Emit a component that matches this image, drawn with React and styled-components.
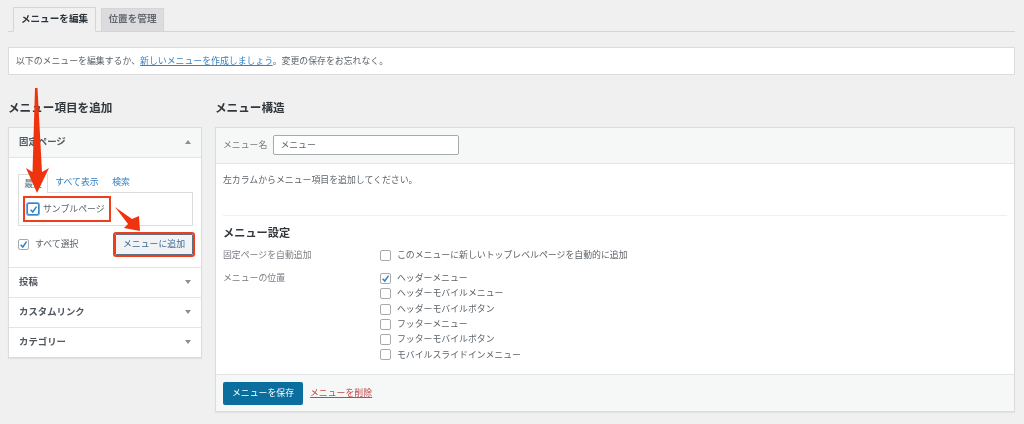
import styled, { createGlobalStyle } from "styled-components";

const GlobalStyle = createGlobalStyle`
  * {
    box-sizing: border-box;
  }

  body {
    margin: 0;
    background-color: #f0f0f1;
    color: #5c6369;
    font-family: "Noto Sans CJK JP", "Liberation Sans", sans-serif;
    font-size: 8.9px;
    line-height: 1.2;
  }
`;

/* --- PAGE --- */
const Page = styled.div`
  position: relative;
  width: 1024px;
  height: 424px;
  padding: 7px 9px 0 8px;
  overflow: hidden;
  filter: blur(0.45px);
`;

/* --- TOP TABS --- */
const TabBar = styled.div`
  display: flex;
  align-items: flex-end;
  gap: 5px;
  height: 25px;
  padding-left: 5px;
  border-bottom: 1px solid #d5d5d7;
`;

const Tab = styled.div`
  display: flex;
  align-items: center;
  justify-content: center;
  width: ${({ $w }) => $w}px;
  height: ${({ $active }) => ($active ? 25 : 24)}px;
  margin-bottom: -1px;
  padding-bottom: 2px;
  border: 1px solid #d5d5d7;
  border-bottom-color: ${({ $active }) => ($active ? "#f0f0f1" : "#d5d5d7")};
  background-color: ${({ $active }) => ($active ? "#f0f0f1" : "#dcdcde")};
  color: ${({ $active }) => ($active ? "#2c3338" : "#646970")};
  font-size: 9.6px;
  font-weight: 700;
`;

const Notice = styled.div`
  display: flex;
  align-items: center;
  height: 28px;
  margin-top: 15px;
  padding: 1px 0 0 7px;
  background-color: #fff;
  border: 1px solid #dcdcde;
`;

const TextLink = styled.span`
  color: ${({ $red }) => ($red ? "#c0484a" : "#3582c4")};
  text-decoration: underline;
`;

/* --- COLUMNS --- */
const Columns = styled.div`
  display: grid;
  grid-template-columns: 194px 800px;
  gap: 13px;
  margin-top: 24px;
`;

const Heading = styled.h2`
  height: 28px;
  margin: 0;
  color: #32373c;
  font-size: 11.6px;
  font-weight: 700;
  line-height: 17px;
`;

/* --- ACCORDION --- */
const Accordion = styled.div`
  background-color: #fff;
  border: 1px solid #dcdcde;
  box-shadow: 0 1px 1px rgba(0, 0, 0, 0.06);
`;

const SectionHead = styled.div`
  display: flex;
  align-items: center;
  justify-content: space-between;
  height: 30px;
  padding: 0 10px 1px;
  background-color: ${({ $open }) => ($open ? "#f6f7f7" : "#fff")};
  border-top: ${({ $open }) => ($open ? "none" : "1px solid #e4e4e6")};
  border-bottom: ${({ $open }) => ($open ? "1px solid #e4e4e6" : "none")};
  color: #50575e;
  font-size: 9.4px;
  font-weight: 700;
`;

const Caret = styled.span`
  width: 0;
  height: 0;
  border-left: 3px solid transparent;
  border-right: 3px solid transparent;
  border-${({ $up }) => ($up ? "bottom" : "top")}: 4px solid #8c8f94;
`;

const SectionBody = styled.div`
  height: 109px;
  padding: 15px 8px 0 9px;
`;

const PanelTabs = styled.div`
  display: flex;
  align-items: flex-end;
  height: 19px;
`;

const PanelTab = styled.div`
  position: relative;
  display: flex;
  align-items: center;
  justify-content: center;
  width: ${({ $w }) => $w}px;
  height: 19px;
  margin-left: ${({ $ml }) => $ml || 0}px;
  margin-bottom: ${({ $active }) => ($active ? "-1px" : "0")};
  border: ${({ $active }) => ($active ? "1px solid #dcdcde" : "none")};
  border-bottom: none;
  background-color: #fff;
  color: ${({ $active }) => ($active ? "#646970" : "#3582c4")};
`;

const PanelBox = styled.div`
  height: 34px;
  padding: 3px 4px;
  border: 1px solid #dcdcde;
`;

const Highlight = styled.label`
  display: flex;
  align-items: center;
  gap: 4px;
  width: 88px;
  height: 26px;
  padding-left: 2px;
  border: 2px solid #ee3f1c;
`;

const Box = styled.span`
  display: flex;
  flex: none;
  align-items: center;
  justify-content: center;
  width: ${({ $focus }) => ($focus ? 12 : 11)}px;
  height: ${({ $focus }) => ($focus ? 12 : 11)}px;
  background-color: #fff;
  border: 1px solid ${({ $focus }) => ($focus ? "#3582c4" : "#a7aaad")};
  border-radius: 2px;
  box-shadow: ${({ $focus }) => ($focus ? "0 0 0 1px #72aee6" : "none")};
`;

const Check = () => (
  <svg width="9" height="9" viewBox="0 0 10 10" aria-hidden="true">
    <path d="M1.8 5.2 L4.2 7.8 L8.4 1.8" fill="none" stroke="#2f7fc4" strokeWidth="1.6" />
  </svg>
);

const SelectRow = styled.div`
  display: flex;
  align-items: center;
  justify-content: space-between;
  margin-top: 8px;
`;

const SelectAll = styled.label`
  display: flex;
  align-items: center;
  gap: 6px;
`;

const AddButton = styled.div`
  display: flex;
  align-items: center;
  justify-content: center;
  width: 78px;
  height: 21px;
  background-color: #f2f3f4;
  border: 1px solid #5f6f85;
  border-radius: 1px;
  outline: 2px solid #ee3f1c;
  color: #3a6a96;
`;

/* --- MENU STRUCTURE --- */
const Editor = styled.div`
  height: 285px;
  display: flex;
  flex-direction: column;
  background-color: #fff;
  border: 1px solid #dcdcde;
  box-shadow: 0 1px 1px rgba(0, 0, 0, 0.05);
`;

const EditorHead = styled.div`
  display: flex;
  align-items: center;
  gap: 6px;
  height: 36px;
  padding: 0 0 2px 7px;
  background-color: #f6f7f7;
  border-bottom: 1px solid #e4e4e6;
  color: #787c82;
`;

const NameLabel = styled.span`
  padding-top: 2px;
`;

const NameInput = styled.div`
  display: flex;
  align-items: center;
  width: 186px;
  height: 20px;
  padding: 2px 0 0 6px;
  background-color: #fff;
  border: 1px solid #a7aaad;
  border-radius: 2px;
  color: #5c6369;
`;

const EditorBody = styled.div`
  flex: 1;
  padding: 0 7px;
`;

const Hint = styled.p`
  height: 52px;
  margin: 0;
  padding-top: 11px;
  border-bottom: 1px solid #f0f0f1;
`;

const SettingsTitle = styled.h3`
  margin: 9px 0 0;
  color: #32373c;
  font-size: 11.2px;
  font-weight: 700;
  line-height: 15px;
`;

const SettingRow = styled.div`
  display: grid;
  grid-template-columns: 157px 1fr;
  margin-top: ${({ $gap }) => $gap}px;
`;

const SettingLabel = styled.div`
  color: #787c82;
  line-height: 10px;
`;

const Options = styled.div`
  display: flex;
  flex-direction: column;
  gap: 4.3px;
`;

const Option = styled.label`
  display: flex;
  align-items: center;
  gap: 6px;
  height: 11px;
`;

const EditorFoot = styled.div`
  display: flex;
  align-items: center;
  gap: 7px;
  height: 37px;
  padding-left: 7px;
  background-color: #f6f7f7;
  border-top: 1px solid #e4e4e6;
`;

const SaveButton = styled.div`
  display: flex;
  align-items: center;
  justify-content: center;
  width: 80px;
  height: 23px;
  background-color: #0a6f9e;
  border-radius: 2px;
  color: #fff;
`;

/* --- RED ARROWS ON TOP --- */
const Arrows = styled.svg`
  position: absolute;
  top: 0;
  left: 0;
  pointer-events: none;
`;

const locations = [
  ["ヘッダーメニュー", true],
  ["ヘッダーモバイルメニュー", false],
  ["ヘッダーモバイルボタン", false],
  ["フッターメニュー", false],
  ["フッターモバイルボタン", false],
  ["モバイルスライドインメニュー", false],
];

export default function App() {
  return (
    <Page>
      <GlobalStyle />
      <TabBar>
        <Tab $active $w={83}>メニューを編集</Tab>
        <Tab $w={63}>位置を管理</Tab>
      </TabBar>

      <Notice>
        <span>
          以下のメニューを編集するか、<TextLink>新しいメニューを作成しましょう</TextLink>。変更の保存をお忘れなく。
        </span>
      </Notice>

      <Columns>
        <div>
          <Heading>メニュー項目を追加</Heading>
          <Accordion>
            <SectionHead $open>
              固定ページ
              <Caret $up />
            </SectionHead>
            <SectionBody>
              <PanelTabs>
                <PanelTab $active $w={30}>最近</PanelTab>
                <PanelTab $w={44} $ml={7}>すべて表示</PanelTab>
                <PanelTab $w={18} $ml={13}>検索</PanelTab>
              </PanelTabs>
              <PanelBox>
                <Highlight>
                  <Box $focus><Check /></Box>
                  サンプルページ
                </Highlight>
              </PanelBox>
              <SelectRow>
                <SelectAll>
                  <Box><Check /></Box>
                  すべて選択
                </SelectAll>
                <AddButton>メニューに追加</AddButton>
              </SelectRow>
            </SectionBody>
            <SectionHead>投稿<Caret /></SectionHead>
            <SectionHead>カスタムリンク<Caret /></SectionHead>
            <SectionHead>カテゴリー<Caret /></SectionHead>
          </Accordion>
        </div>

        <div>
          <Heading>メニュー構造</Heading>
          <Editor>
            <EditorHead>
              <NameLabel>メニュー名</NameLabel>
              <NameInput>メニュー</NameInput>
            </EditorHead>
            <EditorBody>
              <Hint>左カラムからメニュー項目を追加してください。</Hint>
              <SettingsTitle>メニュー設定</SettingsTitle>
              <SettingRow $gap={10}>
                <SettingLabel>固定ページを自動追加</SettingLabel>
                <Option>
                  <Box />
                  このメニューに新しいトップレベルページを自動的に追加
                </Option>
              </SettingRow>
              <SettingRow $gap={12}>
                <SettingLabel>メニューの位置</SettingLabel>
                <Options>
                  {locations.map(([name, on]) => (
                    <Option key={name}>
                      <Box>{on && <Check />}</Box>
                      {name}
                    </Option>
                  ))}
                </Options>
              </SettingRow>
            </EditorBody>
            <EditorFoot>
              <SaveButton>メニューを保存</SaveButton>
              <TextLink $red>メニューを削除</TextLink>
            </EditorFoot>
          </Editor>
        </div>
      </Columns>

      <Arrows width="1024" height="424" viewBox="0 0 1024 424" aria-hidden="true">
        <path d="M35 88 L37.5 88 L42 172 L49 168 L37 193 L26 168 L32.5 172 Z" fill="#f0330f" />
        <path d="M115 207 L132 219 L139 216 L140 231 L124 228 L128 224 Z" fill="#f0330f" />
      </Arrows>
    </Page>
  );
}
